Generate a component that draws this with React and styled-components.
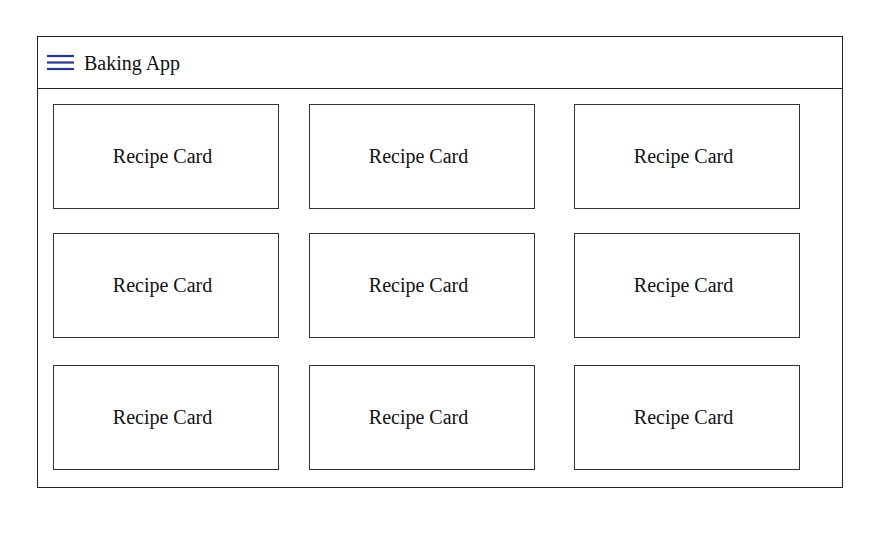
import React from "react";
import styled, { createGlobalStyle } from "styled-components";

const GlobalStyle = createGlobalStyle`
  body {
    margin: 0;
    background: #fff;
    font-family: "Liberation Serif", "Times New Roman", serif;
    color: #111;
  }
`;

const Page = styled.div`
  padding: 36px 0 0 37px;
`;

const Frame = styled.div`
  width: 804px;
  height: 450px;
  border: 1px solid #222;
  display: flex;
  flex-direction: column;
`;

const Header = styled.header`
  height: 51px;
  border-bottom: 1px solid #222;
  display: flex;
  align-items: center;
  padding-left: 9px;
  gap: 10px;
`;

const Title = styled.span`
  font-size: 20px;
  margin-top: 1px;
`;

const Grid = styled.main`
  display: grid;
  grid-template-columns: 256px 265px 225px;
  grid-template-rows: 129px 132px 105px;
  align-items: start;
  padding: 15px 0 0 15px;
`;

const Card = styled.div`
  width: 217px;
  height: 103px;
  padding-right: 7px;
  border: 1px solid #333;
  display: flex;
  align-items: center;
  justify-content: center;
  font-size: 20px;
`;

const Menu = () => (
  <svg width="27" height="17" viewBox="0 0 27 17">
    <g stroke="#27378a" strokeWidth="2.2">
      <line x1="0" y1="2" x2="27" y2="2" />
      <line x1="0" y1="8.5" x2="27" y2="8.5" />
      <line x1="0" y1="15" x2="27" y2="15" />
    </g>
  </svg>
);

export default function App() {
  const cards = Array.from({ length: 9 });
  return (
    <Page>
      <GlobalStyle />
      <Frame>
        <Header>
          <Menu />
          <Title>Baking App</Title>
        </Header>
        <Grid>
          {cards.map((_, i) => (
            <Card key={i}>Recipe Card</Card>
          ))}
        </Grid>
      </Frame>
    </Page>
  );
}
